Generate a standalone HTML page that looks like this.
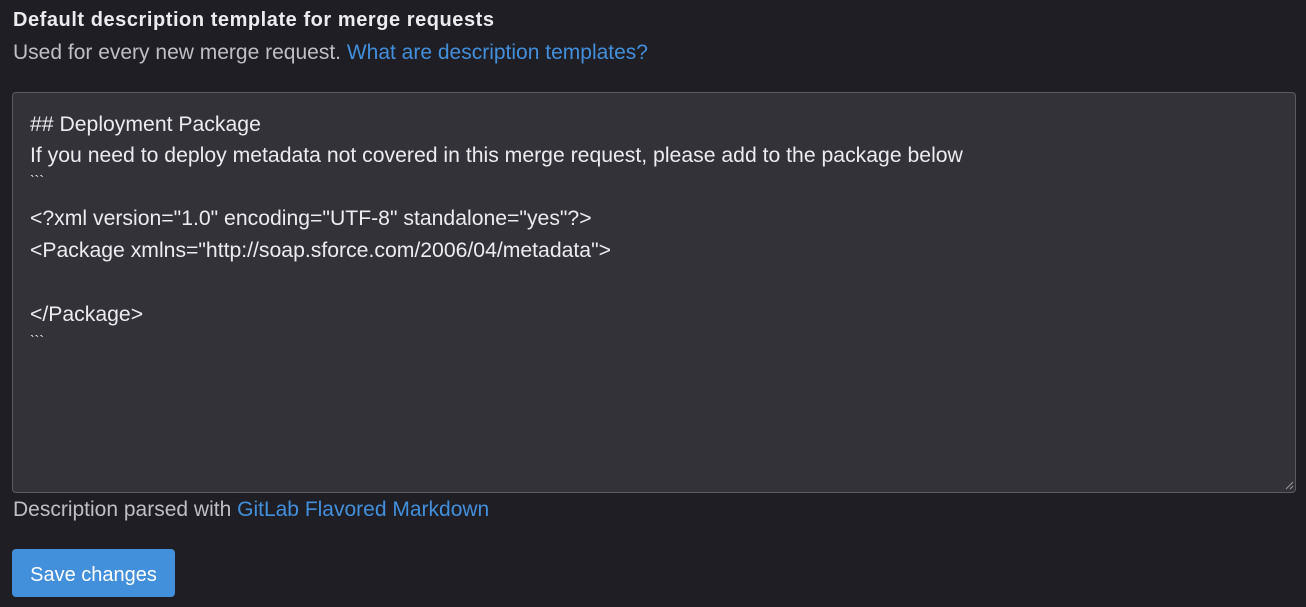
<!DOCTYPE html>
<html><head><style>
body{margin:0;background:#1f1e24;font-family:"Liberation Sans",sans-serif;color:#ececef;width:1306px;height:607px;overflow:hidden;position:relative}
.t{position:absolute;left:13px;top:9px;font-size:20px;font-weight:bold;color:#ececef;letter-spacing:0.55px}
.s{position:absolute;left:13px;top:41px;font-size:21px;color:#bfbfc3}
a{color:#428fdc;text-decoration:none}
.ta{position:absolute;left:12px;top:92px;width:1282px;height:399px;background:#333238;border:1px solid #5c5b61;border-radius:4px}
.l{position:absolute;left:30px;font-size:21.2px;color:#ececef;white-space:pre}
.d{position:absolute;left:13px;top:498px;font-size:21px;color:#bfbfc3}
.b{position:absolute;left:12px;top:549px;width:163px;height:48px;background:#428fdc;border-radius:4px;color:#fff;font-size:20px;line-height:52px;text-align:center}
</style></head><body>
<div class="t">Default description template for merge requests</div>
<div class="s">Used for every new merge request. <a>What are description templates?</a></div>
<div class="ta"></div>
<div class="l" style="top:113px">## Deployment Package</div>
<div class="l" style="top:144px">If you need to deploy metadata not covered in this merge request, please add to the package below</div>
<div class="l" style="top:172px;font-size:14px">&#96;&#96;&#96;</div>
<div class="l" style="top:207px">&lt;?xml version="1.0" encoding="UTF-8" standalone="yes"?&gt;</div>
<div class="l" style="top:239px">&lt;Package xmlns="http://soap.sforce.com/2006/04/metadata"&gt;</div>
<div class="l" style="top:303px">&lt;/Package&gt;</div>
<div class="l" style="top:332px;font-size:14px">&#96;&#96;&#96;</div>
<svg style="position:absolute;left:1284px;top:480px" width="10" height="10"><path d="M2 9L9 2M6 9L9 6" stroke="#999" stroke-width="1"/></svg>
<div class="d">Description parsed with <a>GitLab Flavored Markdown</a></div>
<div class="b">Save changes</div>
</body></html>
